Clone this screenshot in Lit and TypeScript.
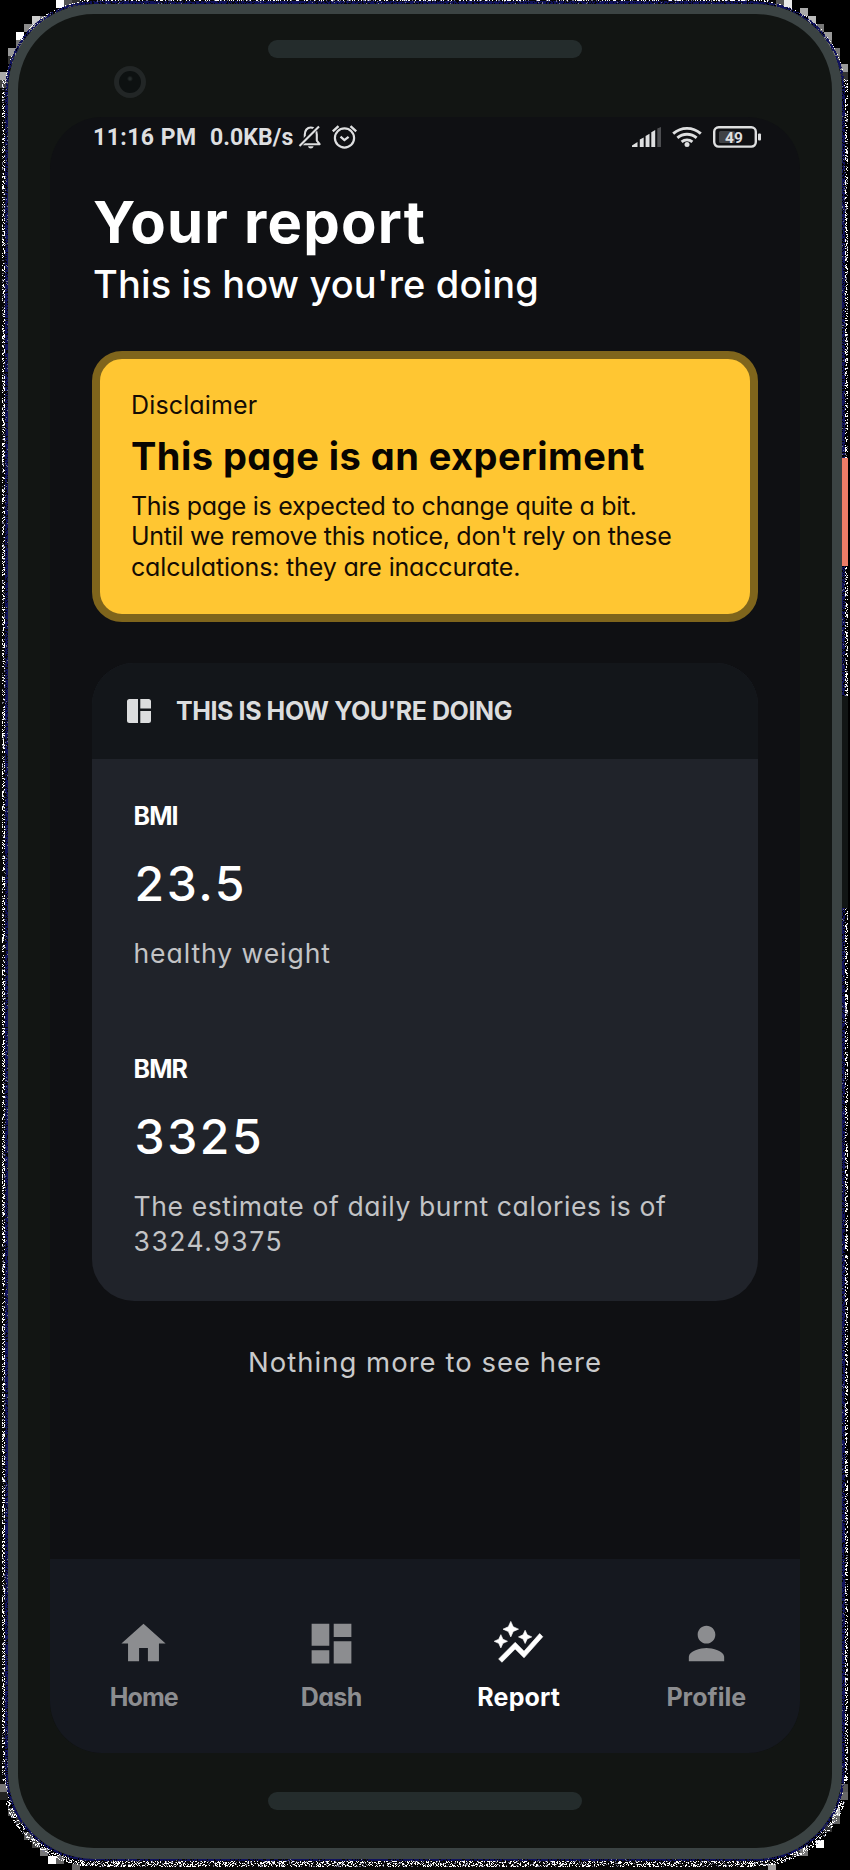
import { LitElement, html, css, svg } from "lit";
import { customElement, property } from "lit/decorators.js";
import { classMap } from "lit/directives/class-map.js";

const W = 850;
const H = 1870;
const BODY = { x0: 8, y0: 4, x1: 842, y1: 1858.5, r: 86 };

/** Signed distance from a pixel centre to the rounded body outline. */
function edgeDistance(x: number, y: number): number {
  const hw = (BODY.x1 - BODY.x0) / 2;
  const hh = (BODY.y1 - BODY.y0) / 2;
  const qx = Math.abs(x - (BODY.x0 + BODY.x1) / 2) - hw + BODY.r;
  const qy = Math.abs(y - (BODY.y0 + BODY.y1) / 2) - hh + BODY.r;
  return Math.hypot(Math.max(qx, 0), Math.max(qy, 0)) + Math.min(Math.max(qx, qy), 0) - BODY.r;
}

/** Grainy rim around the device, one path per colour. */
function grain() {
  let seed = 7;
  const rnd = () => {
    seed = (seed * 1664525 + 1013904223) >>> 0;
    return seed / 4294967296;
  };
  const out = { white: "", navy: "", grey: "" };
  const plot = (x: number, y: number) => {
    const d = edgeDistance(x + 0.5, y + 0.5);
    if (d < 0 || d > 8) return;
    const inCorner = (x < 80 || x > 770) && (y < 80 || y > 1780);
    const limit = y > 1800 ? 8 : inCorner ? 3.2 : 6;
    if (d > limit) return;
    const v = rnd();
    const cell = `M${x} ${y}h1v1h-1z`;
    if (d < 2.6) {
      if (v < 0.72) out.navy += cell;
      else if (v > 0.97) out.grey += cell;
    } else if (v < 0.3) out.white += cell;
    else if (v < 0.42) out.grey += cell;
  };
  for (let y = 0; y < H; y++) {
    const full = y < 95 || y > 1765;
    for (let x = 0; x < W; x++) {
      if (!full && x === 9) x = 840;
      plot(x, y);
    }
  }
  return out;
}

const GRAIN = grain();

/** x, y, colour of the 8px blocks that step round the corners. */
const BLOCKS: [number, number, string][] = [
  [56, 0, "#fff"], [64, 0, "#555"], [72, 0, "#333"], [32, 16, "#ccc"], [40, 16, "#777"],
  [24, 24, "#8a8a8a"], [32, 24, "#999"], [16, 32, "#fff"], [16, 40, "#777"], [8, 48, "#999"],
  [8, 56, "#333"], [0, 72, "#aaa"], [0, 80, "#444"],
  [784, 0, "#e8e8e8"], [776, 0, "#555"], [800, 8, "#aaa"], [808, 16, "#bbb"], [816, 24, "#777"],
  [824, 32, "#999"], [824, 40, "#777"], [832, 48, "#777"], [832, 56, "#555"], [840, 64, "#999"], [840, 72, "#333"],
  [0, 1784, "#777"], [0, 1792, "#222"], [8, 1808, "#555"], [16, 1816, "#333"], [24, 1832, "#555"], [32, 1840, "#444"],
  [40, 1848, "#777"], [48, 1856, "#fff"], [56, 1856, "#666"],
  [840, 1784, "#555"], [840, 1792, "#666"], [832, 1808, "#bbb"], [832, 1816, "#666"], [824, 1824, "#333"], [816, 1840, "#fff"],
  [800, 1848, "#777"], [792, 1848, "#333"], [768, 1864, "#999"], [72, 1864, "#666"],
];

const ICONS = {
  home: svg`<path d="M10 20v-6h4v6h5v-8h3L12 3 2 12h3v8z"/>`,
  dash: svg`<path d="M3 13h8V3H3v10zm0 8h8v-6H3v6zm10 0h8V11h-8v10zm0-18v6h8V3h-8z"/>`,
  report: svg`<path d="M14.06 9.94 12 9l2.06-.94L15 6l.94 2.06L18 9l-2.06.94L15 12zM4 14l.94-2.06L7 11l-2.06-.94L4 8l-.94 2.06L1 11l2.06.94zM8.5 9l1.09-2.41L12 5.5 9.59 4.41 8.5 2 7.41 4.41 5 5.5l2.41 1.09zM4.5 20.5l6-6.01 4 4L23 8.93l-1.41-1.41-7.09 7.97-4-4L3 19z" stroke="currentColor" stroke-width=".3"/>`,
  profile: svg`<path d="M12 12c2.21 0 4-1.79 4-4s-1.79-4-4-4-4 1.79-4 4 1.79 4 4 4zm0 2c-2.67 0-8 1.34-8 4v2h16v-2c0-2.66-5.33-4-8-4z"/>`,
};

@customElement("status-bar")
class StatusBar extends LitElement {
  static styles = css`
    :host {
      display: flex;
      align-items: flex-start;
      height: 41px;
      padding: 0 39px 0 43px;
      color: #dedfe0;
      font: 700 23px/42px Roboto, sans-serif;
      box-sizing: border-box;
      white-space: pre;
    }
    .time { width: 117px; letter-spacing: 0.45px; }
    .rate { width: 88px; letter-spacing: 0.1px; }
    svg { display: block; flex: none; overflow: visible; }
    .bell { margin: 8px 11px 0 1px; }
    .alarm { margin-top: 8px; }
    .fill { flex: 1; }
    .signal { margin-top: 10px; }
    .wifi { margin: 9px 11px 0 11px; }
    .battery { margin-top: 9px; }
    .pct { font: 700 15.5px Roboto, sans-serif; }
  `;
  render() {
    return html`
      <span class="time">11:16 PM</span>
      <span class="rate">0.0KB/s</span>
      <svg class="bell" width="22" height="24" viewBox="0 0 22 24" fill="none" stroke="currentColor" stroke-width="2.1">
        <path d="M3.6 19.2h17l-2.8-3.6V9.5c0-4-2.3-7-6-7s-6 3-6 7v6.1z" stroke-linejoin="round" />
        <path d="M.5 20.5 19.5 1" stroke="#0f1013" stroke-width="4.6" />
        <path d="M.5 21 20 1.6" stroke-width="2.1" />
        <path d="M9 21.2h5.6c-.5 1.6-1.4 2.2-2.8 2.2S9.4 22.8 9 21.2z" fill="currentColor" stroke="none" />
      </svg>
      <svg class="alarm" width="25" height="24" viewBox="0 0 25 24" fill="none" stroke="currentColor" stroke-width="2.200">
        <circle cx="12.5" cy="13" r="9.6" />
        <path d="m8.5 11.7 3.9 3.4 4.2-3.3" stroke-width="2.3" />
        <path d="M.8 6.3 6.5 1.1M24.2 6.3 18.5 1.1" stroke-width="2.4" />
      </svg>
      <span class="fill"></span>
      <svg class="signal" width="29" height="20" viewBox="0 0 29 20" fill="currentColor">
        <path d="M0 20v-1.5l5.5-3.5v5zM7.800 12.5l3.900-2V20H7.800zM13.600 9l3.900-2.3V20h-3.900zM19.300 5.2 23.200 3v17h-3.900z" />
        <path d="M25.3 1.5 29 0v20h-3.7z" opacity=".3" />
      </svg>
      <svg class="wifi" width="30" height="21" viewBox="0 0 30 21" fill="none" stroke="currentColor" stroke-width="2.9">
        <path d="M1.2 7.6c8-7 19.600-7 27.600 0M5.4 11.9c5.6-4.800 13.600-4.800 19.200 0M9.600 15.900c3.200-2.600 7.600-2.600 10.800 0" />
        <circle cx="15" cy="18.6" r="2.5" fill="currentColor" stroke="none" />
      </svg>
      <svg class="battery" width="48" height="22" viewBox="0 0 48 22">
        <rect x="1.2" y="1.2" width="41.6" height="19.4" rx="4.5" fill="none" stroke="currentColor" stroke-width="2.4" />
        <rect x="6" y="5" width="16" height="12" rx="1.5" fill="#404246" />
        <rect x="45" y="7.5" width="3" height="7" rx="1" fill="currentColor" />
        <text class="pct" x="21" y="16.5" text-anchor="middle" fill="currentColor">49</text>
      </svg>
    `;
  }
}

@customElement("metric-block")
class MetricBlock extends LitElement {
  @property() name = "";
  @property() value = "";
  static styles = css`
    :host { display: block; }
    .name { margin-left: -1px; font-size: 25px; font-weight: 700; line-height: 30px; letter-spacing: -0.9px; }
    .value { margin: 24px 0 23.5px; font-size: 48px; font-weight: 500; line-height: 58px; letter-spacing: 2.55px; }
    .note { margin-left: -1px; color: #c3c4c6; font-size: 26.5px; line-height: 35px; }
  `;
  render() {
    return html`
      <div class="name">${this.name}</div>
      <div class="value">${this.value}</div>
      <div class="note"><slot></slot></div>
    `;
  }
}

@customElement("nav-bar")
class NavBar extends LitElement {
  static styles = css`
    :host {
      display: grid;
      grid-template-columns: repeat(4, 1fr);
      height: 194px;
      background: #15181f;
      color: #8c8d90;
    }
    .item { display: flex; flex-direction: column; align-items: center; padding-top: 58px; }
    .item.on { color: #fff; }
    svg { width: 53px; height: 53px; fill: currentColor; }
    .label { margin-top: 11.5px; font-size: 25px; font-weight: 700; line-height: 30px; }
    .home { letter-spacing: -0.94px; }
    .dash { letter-spacing: -0.61px; }
    .report { letter-spacing: 0.15px; }
  `;
  render() {
    const items: [keyof typeof ICONS, string][] = [
      ["home", "Home"],
      ["dash", "Dash"],
      ["report", "Report"],
      ["profile", "Profile"],
    ];
    return items.map(
      ([id, label]) => html`
        <div class=${classMap({ item: true, on: id === "report" })}>
          <svg viewBox="0 0 24 24">${ICONS[id]}</svg>
          <span class=${classMap({ label: true, [id]: true })}>${label}</span>
        </div>
      `
    );
  }
}

@customElement("app-root")
class AppRoot extends LitElement {
  static styles = css`
    :host {
      display: block;
      position: relative;
      width: 850px;
      height: 1870px;
      overflow: hidden;
      background: #000;
      color: #fff;
      font-family: Inter, sans-serif;
      font-feature-settings: "cv11";
      white-space: nowrap;
    }
    .backdrop { position: absolute; inset: 0; }
    .phone {
      position: relative;
      box-sizing: border-box;
      width: 834px;
      height: 1854.5px;
      margin-left: 8px;
      border: 10.5px solid #3b4343;
      border-bottom-width: 11px;
      border-radius: 86px;
      background: #121513;
      padding: 26px 32px 0;
    }
    .phone-wrap { padding-top: 4px; }
    .speaker { width: 314px; height: 18px; margin: 0 auto; border-radius: 9px; background: #242c2c; }
    .camera {
      box-sizing: border-box;
      width: 32px;
      height: 32px;
      margin: 8px 0 19px 64px;
      border: 5.5px solid #222626;
      border-radius: 50%;
      background: radial-gradient(circle at 50% 35%, #252b2b 0 1px, #0d1111 3px);
    }
    .screen {
      display: flex;
      flex-direction: column;
      height: 1636px;
      margin-bottom: 39px;
      border-radius: 52px;
      overflow: hidden;
      background: #0f1013;
    }
    .content { flex: 1; padding: 29px 42px 0; }
    .title { margin-left: 1px; font-size: 58px; font-weight: 700; line-height: 70px; letter-spacing: 1.2px; }
    .subtitle { margin: 3px 0 43px 1px; font-size: 38px; font-weight: 500; line-height: 48px; letter-spacing: 0.14px; }
    .notice {
      box-sizing: border-box;
      height: 270.5px;
      border: 8px solid #7f651c;
      border-radius: 30px;
      background: #ffc632;
      color: #140c04;
      padding: 31px 0 0 31px;
    }
    .kicker { font-size: 25px; line-height: 30px; letter-spacing: 0.14px; }
    .notice-title { margin: 12px 0 11px; color: #080501; font-size: 38px; font-weight: 700; line-height: 48px; letter-spacing: 0.46px; }
    .notice-text { font-size: 25px; line-height: 30.4px; letter-spacing: -0.29px; }
    .last { letter-spacing: -0.17px; }
    .card {
      height: 637.5px;
      margin-top: 41.5px;
      border-radius: 42px;
      overflow: hidden;
      background: #20232a;
    }
    .card-head {
      display: flex;
      align-items: center;
      box-sizing: border-box;
      height: 96px;
      padding: 0 0 1px 35px;
      background: #13161a;
      color: #dcddde;
      font-size: 25px;
      font-weight: 700;
      letter-spacing: -0.42px;
    }
    .card-head svg { width: 24px; height: 24px; margin-right: 25px; fill: currentColor; }
    .metrics { display: flex; flex-direction: column; gap: 82.5px; padding: 41.5px 0 0 42.5px; }
    .weight { letter-spacing: 0.95px; }
    .estimate { letter-spacing: 0.62px; }
    .figure { letter-spacing: 1.54px; }
    .end { margin-top: 43px; color: #c9cacb; font-size: 27.5px; line-height: 36px; letter-spacing: 1.02px; text-align: center; }
  `;
  render() {
    return html`
      <svg class="backdrop" width="850" height="1870" viewBox="0 0 850 1870" shape-rendering="crispEdges">
        <path d="M0 88h8v1696H0zM56 0h730v4H56zM80 1858h690v12H80z" fill="#080808" />
        ${BLOCKS.map(([x, y, c]) => svg`<rect x=${x} y=${y} width="8" height="8" fill=${c} />`)}
        <path d=${GRAIN.navy} fill="#10125c" />
        <path d=${GRAIN.grey} fill="#77788c" />
        <path d=${GRAIN.white} fill="#fff" />
        <rect x="840" y="696" width="8" height="212" fill="#111514" />
        <rect x="842" y="458" width="6" height="108" fill="#ec7c66" />
      </svg>
      <div class="phone-wrap">
        <div class="phone">
          <div class="speaker"></div>
          <div class="camera"></div>
          <div class="screen">
            <status-bar></status-bar>
            <div class="content">
              <div class="title">Your report</div>
              <div class="subtitle">This is how you're doing</div>
              <div class="notice">
                <div class="kicker">Disclaimer</div>
                <div class="notice-title">This page is an experiment</div>
                <div class="notice-text">
                  This page is expected to change quite a bit.<br />Until we remove this notice, don't rely on these<br /><span class="last">calculations: they are inaccurate.</span>
                </div>
              </div>
              <div class="card">
                <div class="card-head">
                  <svg viewBox="0 0 24 24">
                    <path d="M2.5 0H11v24H2.5Q0 24 0 21.5v-19Q0 0 2.5 0zM13.3 0h8.200Q24 0 24 2.500V9.600H13.300zM13.300 12H24v9.500q0 2.500-2.500 2.500h-8.200z" />
                  </svg>
                  <span>THIS IS HOW YOU'RE DOING</span>
                </div>
                <div class="metrics">
                  <metric-block name="BMI" value="23.5"><span class="weight">healthy weight</span></metric-block>
                  <metric-block name="BMR" value="3325"
                    ><span class="estimate">The estimate of daily burnt calories is of</span><br /><span class="figure">3324.9375</span></metric-block
                  >
                </div>
              </div>
              <div class="end">Nothing more to see here</div>
            </div>
            <nav-bar></nav-bar>
          </div>
          <div class="speaker"></div>
        </div>
      </div>
    `;
  }
}
